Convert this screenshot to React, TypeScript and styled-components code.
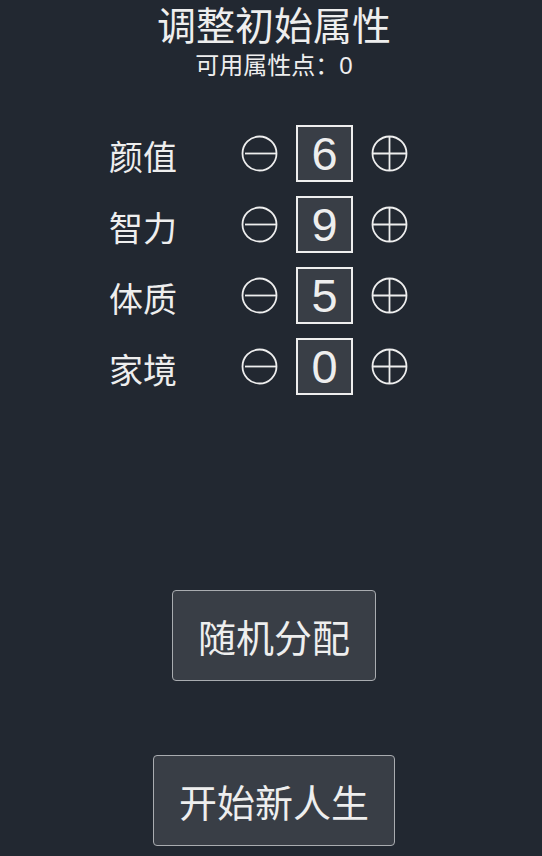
import styled, { createGlobalStyle } from "styled-components";

const GlobalStyle = createGlobalStyle`
  html, body {
    margin: 0;
    padding: 0;
    background: #222831;
  }
  body {
    font-family: "Liberation Sans", "Noto Sans CJK SC", sans-serif;
    color: #eeeeee;
  }
`;

const attrs = [
  { name: "颜值", value: 6 },
  { name: "智力", value: 9 },
  { name: "体质", value: 5 },
  { name: "家境", value: 0 },
];

function MinusIcon() {
  return (
    <svg width="37" height="37" viewBox="0 0 37 37">
      <circle cx="18.5" cy="18.5" r="17" fill="none" stroke="#eeeeee" strokeWidth="1.8" />
      <line x1="4" y1="18.5" x2="35.5" y2="18.5" stroke="#eeeeee" strokeWidth="1.8" />
    </svg>
  );
}

function PlusIcon() {
  return (
    <svg width="37" height="37" viewBox="0 0 37 37">
      <circle cx="18.5" cy="18.5" r="17" fill="none" stroke="#eeeeee" strokeWidth="1.8" />
      <line x1="1.5" y1="18.5" x2="35.5" y2="18.5" stroke="#eeeeee" strokeWidth="1.8" />
      <line x1="18.5" y1="1.5" x2="18.5" y2="35.5" stroke="#eeeeee" strokeWidth="1.8" />
    </svg>
  );
}

export default function App() {
  return (
    <>
      <GlobalStyle />
      <Page>
        <Title>调整初始属性</Title>
        <Points>可用属性点：0</Points>
        <AttrList>
          {attrs.map((a) => (
            <AttrRow key={a.name}>
              <AttrName>{a.name}</AttrName>
              <StepButton>
                <MinusIcon />
              </StepButton>
              <ValueBox>{a.value}</ValueBox>
              <StepButton>
                <PlusIcon />
              </StepButton>
            </AttrRow>
          ))}
        </AttrList>
        <ActionButton $top={195}>随机分配</ActionButton>
        <ActionButton $top={74}>开始新人生</ActionButton>
      </Page>
    </>
  );
}

const Page = styled.div`
  min-height: 100vh;
  box-sizing: border-box;
  padding-left: 6px;
  display: flex;
  flex-direction: column;
  align-items: center;
`;

const Title = styled.h1`
  margin: 4px 0 0;
  font-size: 39px;
  font-weight: 400;
  line-height: 46px;
`;

const Points = styled.div`
  margin-top: 2px;
  font-size: 24px;
  line-height: 28px;
`;

const AttrList = styled.div`
  width: 330px;
  margin-top: 45px;
  display: flex;
  flex-direction: column;
  gap: 14px;
`;

const AttrRow = styled.div`
  display: flex;
  align-items: center;
  height: 57px;
`;

const AttrName = styled.div`
  width: 132px;
  font-size: 34px;
  line-height: 40px;
  padding-top: 9px;
`;

const StepButton = styled.div`
  width: 37px;
  height: 37px;
  display: flex;
  margin-top: -1px;
`;

const ValueBox = styled.div`
  box-sizing: border-box;
  width: 57px;
  height: 57px;
  margin: 0 18px;
  border: 2px solid #eeeeee;
  background: #393e46;
  display: flex;
  align-items: center;
  justify-content: center;
  font-size: 47px;
`;

const ActionButton = styled.button<{ $top: number }>`
  margin-top: ${(p) => p.$top}px;
  height: 91px;
  padding: 0 25px;
  background: #393e46;
  color: #eeeeee;
  border: 1px solid #a9acb0;
  border-radius: 4px;
  font-family: "Liberation Sans", "Noto Sans CJK SC", sans-serif;
  font-size: 38px;
`;
